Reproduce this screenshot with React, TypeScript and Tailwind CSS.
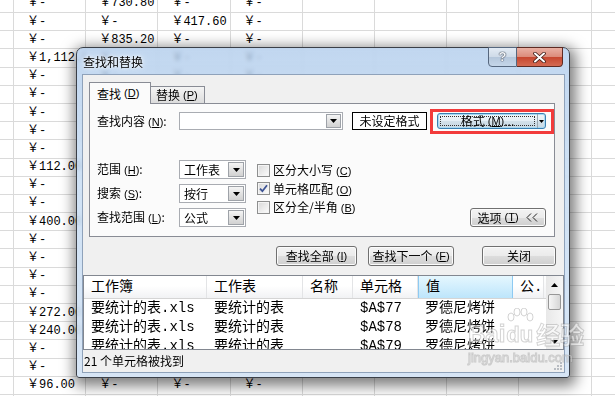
import React from 'react';

// column 1 of the sheet, top to bottom
const col1 = [
  '-', '-', '-', '1,112.00', '-', '-', '-', '-', '-', '112.00', '-', '-',
  '400.00', '-', '-', '-', '-', '272.00', '240.00', '-', '-', '96.00', '-',
];

const extra: Record<number, string[]> = {
  0: ['￥730.80', '￥-', '￥-'],
  1: ['￥-', '￥417.60', '￥-'],
  2: ['￥835.20', '￥-', '￥-'],
};

function Sheet() {
  return (
    <div className="mt-[-5.2px] font-['Liberation_Mono','Noto_Sans_CJK_SC',monospace] text-[12px] text-black">
      {col1.map((v, r) => {
        const cells = ['￥' + v, ...(extra[r] ?? ['￥-', '￥-', '￥-']), '', '', '', ''];
        return (
          <div key={r} className="flex h-[18.2px] border-b border-[#dadada]">
            <div className="w-[14px] shrink-0 border-r border-[#dadada]" />
            {cells.map((c, i) => (
              <div
                key={i}
                className="flex w-[72.2px] shrink-0 items-center overflow-hidden whitespace-nowrap border-r border-[#dadada] pl-[13px]"
              >
                {c}
              </div>
            ))}
            <div className="flex-1" />
          </div>
        );
      })}
    </div>
  );
}

function Hk({ k }: { k: string }) {
  return (
    <span className="ml-[3px] font-['Liberation_Sans',sans-serif] text-[11px]">
      (<span className="underline">{k}</span>)
    </span>
  );
}

function Arrow({ up }: { up?: boolean }) {
  return (
    <svg width="7" height="4" viewBox="0 0 7 4">
      <path d={up ? 'M0 4h7L3.5 0z' : 'M0 0h7L3.5 4z'} fill="#000" />
    </svg>
  );
}

function DropBtn({ className }: { className: string }) {
  return (
    <div
      className={`flex items-center justify-center border border-[#9ea2a8] bg-[linear-gradient(#f5f5f5,#e2e2e2_50%,#d2d2d2)] ${className}`}
    >
      <Arrow />
    </div>
  );
}

function Select({ text, className }: { text: string; className: string }) {
  return (
    <div className={`flex h-[19px] items-stretch border border-[#a9acb2] bg-white p-[1px] ${className}`}>
      <span className="flex flex-1 items-center pl-[3px]">{text}</span>
      <DropBtn className="w-[16px]" />
    </div>
  );
}

function Btn({ className, children }: { className: string; children: React.ReactNode }) {
  return (
    <div
      className={`flex items-center justify-center rounded-[3px] border border-[#707070] bg-[linear-gradient(#f3f3f3,#ebebeb_50%,#dddddd_51%,#cfcfcf)] shadow-[inset_0_0_0_1px_#fbfbfb] ${className}`}
    >
      {children}
    </div>
  );
}

function Check({ checked, label, hk }: { checked?: boolean; label: string; hk: string }) {
  return (
    <div className="flex h-[18.5px] items-center">
      <div className="flex h-[13px] w-[13px] items-center justify-center border border-[#8e8f8f] bg-[linear-gradient(135deg,#d8d8d8,#fdfdfd)] shadow-[inset_0_0_0_1px_#f4f4f4]">
        {checked && (
          <svg width="9" height="9" viewBox="0 0 9 9">
            <path d="M1 4.6 L3.4 7.2 L8 1.3" fill="none" stroke="#3d5394" strokeWidth="1.8" />
          </svg>
        )}
      </div>
      <span className="ml-[3px]">
        {label}
        <Hk k={hk} />
      </span>
    </div>
  );
}

const cols = [
  { t: '工作簿', w: 'w-[123px]' },
  { t: '工作表', w: 'w-[96px]' },
  { t: '名称', w: 'w-[50px]' },
  { t: '单元格', w: 'w-[65px]' },
  { t: '值', w: 'w-[95px]', hot: true },
  { t: '公.', w: 'w-[31px]' },
];

const results = [
  ['要统计的表.xls', '要统计的表', '', '$A$77', '罗德尼烤饼', ''],
  ['要统计的表.xls', '要统计的表', '', '$A$78', '罗德尼烤饼', ''],
  ['要统计的表.xls', '要统计的表', '', '$A$79', '罗德尼烤饼', ''],
];

function ResultList() {
  return (
    <div className="flex h-[75px] shrink-0 border border-[#828790] bg-white font-['Liberation_Mono','Noto_Sans_CJK_SC',monospace] text-[14px]">
      <div className="flex-1 overflow-hidden">
        <div className="flex h-[23px] border-b border-[#d5d5d5]">
          {cols.map((c) => (
            <div
              key={c.t}
              className={`flex shrink-0 items-center pl-[7px] ${c.w} ${
                c.hot
                  ? 'border-x border-[#8ecaf2] bg-[linear-gradient(#e5f7fe,#d3effd_45%,#bde5fb)]'
                  : 'border-r border-[#e3e4e6] bg-[linear-gradient(#ffffff,#ffffff_45%,#f1f2f4)]'
              }`}
            >
              {c.t}
            </div>
          ))}
          <div className="flex-1 bg-[linear-gradient(#ffffff,#f1f2f4)]" />
        </div>
        {results.map((r, i) => (
          <div key={i} className="flex h-[19px] items-center">
            {r.map((v, j) => (
              <div key={j} className={`shrink-0 overflow-hidden whitespace-nowrap pl-[7px] ${cols[j].w}`}>
                {v}
              </div>
            ))}
          </div>
        ))}
      </div>
      <div className="flex w-[17px] shrink-0 flex-col bg-[linear-gradient(to_right,#e8e8e8,#f6f6f6)]">
        <div className="flex h-[17px] items-center justify-center">
          <Arrow up />
        </div>
        <div className="mx-[2px] mt-[1px] h-[16px] rounded-[2px] border border-[#979797] bg-[linear-gradient(to_right,#f6f6f6,#e6e6e6_50%,#d6d6d6)]" />
        <div className="flex-1" />
        <div className="flex h-[14px] items-center justify-center">
          <Arrow />
        </div>
      </div>
    </div>
  );
}

function Dialog() {
  return (
    <div className="absolute left-[76px] top-[47px] flex h-[331px] w-[494px] flex-col rounded-t-[7px] rounded-b-[3px] border border-[#3a3f47] bg-[linear-gradient(rgba(178,205,236,0.8),rgba(200,221,243,0.86)_40%,rgba(210,226,244,0.9))] pb-[5px] pl-[6px] pr-[5px] font-['Noto_Sans_CJK_SC',sans-serif] text-[12px] text-black shadow-[2px_4px_14px_4px_rgba(0,0,0,0.5)] backdrop-blur-[2px]">
      <div className="flex h-[27px] shrink-0 items-center [text-shadow:0_0_6px_#fff,0_0_3px_#fff]">查找和替换</div>

      {/* caption buttons */}
      <div className="absolute right-[6px] top-[-1px] flex h-[20px]">
        <div className="flex w-[29px] items-center justify-center rounded-bl-[4px] border border-[#56677e] bg-[linear-gradient(#e3ebf4,#cfdbe8_48%,#b5c7db_52%,#c5d6e9)] font-['Liberation_Sans',sans-serif] text-[13px] font-bold text-[#f4f6f8] [text-shadow:0_0_1px_#3a4656,0_0_1px_#3a4656,0_0_1px_#3a4656]">
          ?
        </div>
        <div className="flex w-[46px] items-center justify-center rounded-br-[4px] border border-l-0 border-[#5e2a22] bg-[linear-gradient(#e9b0a3,#dc8c7b_48%,#c7472f_52%,#d46a52)]">
          <svg width="13" height="11" viewBox="0 0 13 11">
            <path d="M2 1.5 L11 9.5 M11 1.5 L2 9.5" stroke="#3b1a14" strokeWidth="3.6" strokeLinecap="round" />
            <path d="M2 1.5 L11 9.5 M11 1.5 L2 9.5" stroke="#ffffff" strokeWidth="2" strokeLinecap="round" />
          </svg>
        </div>
      </div>

      {/* client area */}
      <div className="flex flex-1 flex-col bg-[#f0f0f0] shadow-[0_0_0_1px_#8fa2ba]">
        <div className="ml-[6px] mt-[7px] flex h-[21px] items-end">
          <div className="relative z-10 -mb-px flex h-[22px] w-[62px] items-center border border-b-0 border-[#898c95] bg-[#fbfbfb] pl-[7px]">
            查找
            <Hk k="D" />
          </div>
          <div className="flex h-[17px] w-[54px] items-center border border-b-0 border-l-0 border-[#898c95] bg-[linear-gradient(#f4f4f4,#e9e9e9_50%,#dcdcdc)] pl-[5px]">
            替换
            <Hk k="P" />
          </div>
        </div>

        <div className="ml-[6px] h-[134px] w-[466px] shrink-0 border border-[#898c95] bg-[#fbfbfb] pl-[7px] pt-[8px]">
          <div className="flex h-[18px] items-center">
            <span className="w-[82px] shrink-0">
              查找内容
              <Hk k="N" />:
            </span>
            <div className="flex h-[18px] w-[164px] items-stretch border border-[#a9acb2] bg-white p-[1px]">
              <span className="flex-1" />
              <DropBtn className="w-[15px]" />
            </div>
            <div className="ml-[9px] flex h-[18px] w-[75px] items-center justify-center border border-black bg-white">
              未设定格式
            </div>
            <div className="ml-[3px] flex h-[25px] w-[124px] shrink-0 items-center border-[3px] border-[#f23b3b] pl-[4px]">
              <div className="flex h-[16px] w-[109px] rounded-[3px] border border-[#3c7fb1] bg-[linear-gradient(#f0f6fa,#e4eef5_50%,#d3e1ea_51%,#c8d8e3)] shadow-[inset_0_0_0_1px_#a8daf4]">
                <div className="m-[2px] flex flex-1 items-center justify-center border border-dotted border-[#333] leading-none">
                  格式
                  <Hk k="M" />
                  ...
                </div>
                <div className="flex w-[8px] items-center justify-center border-l border-[#9aa7b0]">
                  <svg width="5" height="3" viewBox="0 0 5 3">
                    <path d="M0 0h5L2.5 3z" fill="#000" />
                  </svg>
                </div>
              </div>
            </div>
          </div>

          <div className="mt-[30px] flex h-[67px]">
            <div className="flex flex-col gap-[5px]">
              <div className="flex h-[19px] items-center">
                <span className="w-[82px]">
                  范围
                  <Hk k="H" />:
                </span>
                <Select text="工作表" className="w-[67px]" />
              </div>
              <div className="flex h-[19px] items-center">
                <span className="w-[82px]">
                  搜索
                  <Hk k="S" />:
                </span>
                <Select text="按行" className="w-[67px]" />
              </div>
              <div className="flex h-[19px] items-center">
                <span className="w-[82px]">
                  查找范围
                  <Hk k="L" />:
                </span>
                <Select text="公式" className="w-[67px]" />
              </div>
            </div>
            <div className="ml-[11px] pt-[1px]">
              <Check label="区分大小写" hk="C" />
              <Check label="单元格匹配" hk="O" checked />
              <Check label="区分全/半角" hk="B" />
            </div>
            <Btn className="mb-0 ml-auto mr-[8px] h-[19px] w-[76px] self-end">
              选项
              <Hk k="T" />
              <svg className="ml-[7px]" width="13" height="9" viewBox="0 0 13 9">
                <path d="M5 0.5 L1 4.5 L5 8.5 M11 0.5 L7 4.5 L11 8.5" fill="none" stroke="#222" strokeWidth="1" />
              </svg>
            </Btn>
          </div>
        </div>

        <div className="ml-[193px] mt-[9px] flex h-[20px] shrink-0">
          <Btn className="w-[81px]">
            查找全部
            <Hk k="I" />
          </Btn>
          <Btn className="ml-[11px] w-[86px]">
            查找下一个
            <Hk k="F" />
          </Btn>
          <Btn className="ml-[28px] w-[74px]">关闭</Btn>
        </div>

        <div className="mt-[9px]">
          <ResultList />
        </div>

        <div className="relative flex flex-1 items-center pl-[1px]">
          21 个单元格被找到
          <svg className="absolute bottom-[2px] right-[2px]" width="10" height="10" viewBox="0 0 10 10">
            <g fill="#b8bcc2">
              <rect x="8" y="2" width="2" height="2" />
              <rect x="5" y="5" width="2" height="2" />
              <rect x="8" y="5" width="2" height="2" />
              <rect x="2" y="8" width="2" height="2" />
              <rect x="5" y="8" width="2" height="2" />
              <rect x="8" y="8" width="2" height="2" />
            </g>
          </svg>
        </div>
      </div>
    </div>
  );
}

function Watermark() {
  return (
    <div className="pointer-events-none absolute left-[468px] top-[322px] flex flex-col font-['Liberation_Sans',sans-serif] text-[rgba(255,255,255,0.55)] [-webkit-text-stroke:1px_rgba(130,130,130,0.35)]">
      <div className="flex items-end leading-none">
        <span className="text-[24px] font-bold">Bai</span>
        <span className="relative ml-[1px] text-[22px] font-bold">
          <svg className="absolute left-[0px] top-[-16px]" width="28" height="22" viewBox="0 0 28 22">
            <g fill="rgba(255,255,255,0.5)" stroke="rgba(130,130,130,0.35)">
              <ellipse cx="5" cy="9" rx="3" ry="4" />
              <ellipse cx="11" cy="4" rx="3" ry="4" />
              <ellipse cx="18" cy="4" rx="3" ry="4" />
              <ellipse cx="24" cy="9" rx="3" ry="4" />
            </g>
          </svg>
          du
        </span>
        <span className="ml-[3px] font-['Noto_Sans_CJK_SC',sans-serif] text-[24px] font-bold">经验</span>
      </div>
      <span className="mt-[2px] text-[13px]">jingyan.baidu.com</span>
    </div>
  );
}

export default function App() {
  return (
    <div className="relative h-[396px] w-[615px] overflow-hidden bg-white">
      <Sheet />
      <Dialog />
      <Watermark />
    </div>
  );
}
